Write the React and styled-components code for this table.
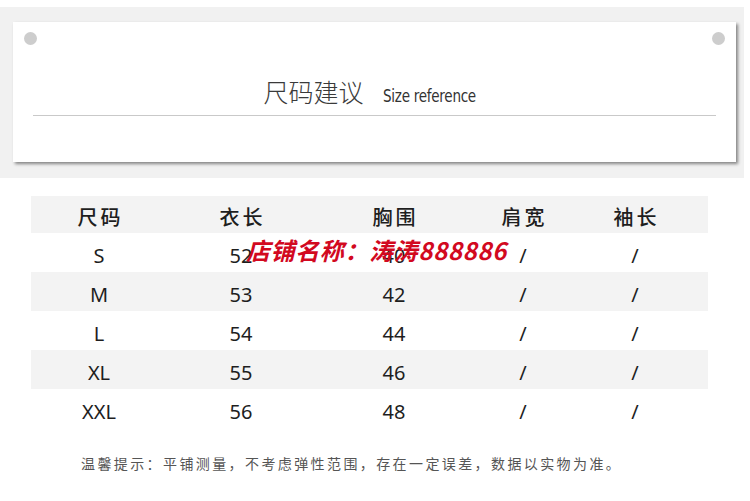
import React from 'react';
import styled, { createGlobalStyle } from 'styled-components';

const GlobalStyle = createGlobalStyle`
  body {
    margin: 0;
    background: #ffffff;
    font-family: "Noto Sans CJK SC", "Noto Sans", sans-serif;
  }
`;

const rows = [
  ['S', '52', '40', '/', '/'],
  ['M', '53', '42', '/', '/'],
  ['L', '54', '44', '/', '/'],
  ['XL', '55', '46', '/', '/'],
  ['XXL', '56', '48', '/', '/'],
];

const App = () => {
  return (
    <Page>
      <GlobalStyle />
      <Band>
        <Card>
          <DotRow>
            <Dot />
            <Dot />
          </DotRow>
          <Title>
            <TitleCn>尺码建议</TitleCn>
            <TitleEn>Size reference</TitleEn>
          </Title>
          <Rule />
        </Card>
      </Band>

      <Table>
        <Row shaded header>
          {['尺码', '衣长', '胸围', '肩宽', '袖长'].map((h) => (
            <HeadCell key={h}>{h}</HeadCell>
          ))}
        </Row>
        {rows.map((r, i) => (
          <Row key={r[0]} shaded={i % 2 === 1}>
            {r.map((c, j) => (
              <Cell key={j}>{c}</Cell>
            ))}
          </Row>
        ))}
        <Watermark>店铺名称：涛涛888886</Watermark>
      </Table>

      <Note>温馨提示：平铺测量，不考虑弹性范围，存在一定误差，数据以实物为准。</Note>
    </Page>
  );
};

const Page = styled.div`
  width: 750px;
  height: 501px;
  overflow: hidden;
  padding-top: 7px;
  box-sizing: border-box;
`;

const Band = styled.div`
  width: 744px;
  height: 171px;
  background: #f1f1f1;
  padding: 15px 0 0 13px;
  box-sizing: border-box;
`;

const Card = styled.div`
  width: 723px;
  height: 140px;
  background: #ffffff;
  box-shadow: 2px 2px 3px rgba(0, 0, 0, 0.45);
  display: flex;
  flex-direction: column;
  padding: 10px 11px 0 11px;
  box-sizing: border-box;
`;

const DotRow = styled.div`
  display: flex;
  justify-content: space-between;
`;

const Dot = styled.div`
  width: 13px;
  height: 13px;
  border-radius: 50%;
  background: #cdcdcd;
`;

const Title = styled.div`
  display: flex;
  align-items: baseline;
  justify-content: center;
  gap: 19px;
  margin-top: 31px;
  padding-left: 2px;
  line-height: 30px;
  height: 30px;
`;

const TitleCn = styled.span`
  font-size: 25px;
  font-weight: 300;
  color: #3a3a3a;
`;

const TitleEn = styled.span`
  display: inline-block;
  font-family: "Liberation Sans Narrow", "DejaVu Sans Condensed", sans-serif;
  font-size: 17px;
  color: #333333;
  letter-spacing: -0.3px;
  transform: scaleX(0.885);
  transform-origin: left center;
`;

const Rule = styled.div`
  height: 1px;
  background: #c9c9c9;
  margin: 9px 9px 0 9px;
`;

const Table = styled.div`
  position: relative;
  width: 677px;
  margin: 18px 0 0 31px;
`;

const Row = styled.div`
  display: grid;
  grid-template-columns: 136px 148px 158px 100px 124px;
  padding-right: 11px;
  height: ${(p) => (p.header ? '37px' : '39px')};
  align-items: center;
  background: ${(p) => (p.shaded ? '#f3f3f3' : '#ffffff')};
`;

const HeadCell = styled.div`
  text-align: center;
  font-size: 20px;
  font-weight: 500;
  color: #1e1e1e;
  letter-spacing: 3px;
  padding-left: 3px;
  padding-top: 4px;
`;

const Cell = styled.div`
  text-align: center;
  font-family: "Noto Sans", "Noto Sans CJK SC", sans-serif;
  font-size: 20px;
  color: #1e1e1e;
  padding-top: 6px;
`;

const Watermark = styled.div`
  position: absolute;
  left: 215px;
  top: 41px;
  font-size: 24px;
  line-height: 26px;
  font-weight: 700;
  font-style: italic;
  color: #d2091f;
  letter-spacing: 0.6px;
  white-space: nowrap;
`;

const Note = styled.div`
  margin: 25px 0 0 81px;
  font-size: 14px;
  line-height: 20px;
  color: #555555;
  letter-spacing: 2.4px;
  white-space: nowrap;
`;

export default App;
